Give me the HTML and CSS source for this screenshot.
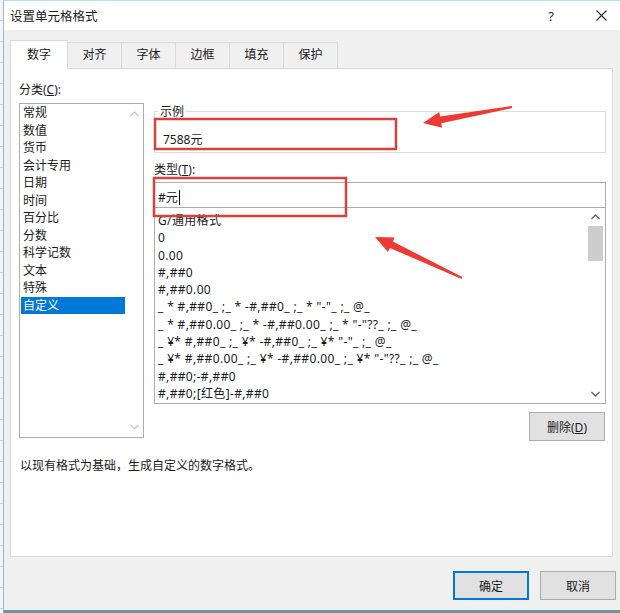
FILE: index.html
```html
<!DOCTYPE html>
<html lang="zh-CN">
<head>
    <meta charset="UTF-8">
    <meta name="viewport" content="width=device-width, initial-scale=1.0">
    <title>设置单元格格式</title>
    <link rel="stylesheet" href="styles.css">
</head>
<body>
    <div class="window">
        <!-- Title bar -->
        <div class="titlebar">
            <span class="title">设置单元格格式</span>
            <span class="help">?</span>
            <span class="close">
                <svg width="11" height="11" viewBox="0 0 11 11"><path d="M0.5 0.5 L10.5 10.5 M10.5 0.5 L0.5 10.5" stroke="#2b2b2b" stroke-width="1.1" fill="none"/></svg>
            </span>
        </div>

        <div class="dialog-body">
            <!-- Tabs -->
            <div class="tabs">
                <div class="tab active">数字</div>
                <div class="tab">对齐</div>
                <div class="tab">字体</div>
                <div class="tab">边框</div>
                <div class="tab">填充</div>
                <div class="tab">保护</div>
            </div>

            <div class="panel">
                <div class="panel-main">
                    <!-- Category list -->
                    <div class="col-left">
                        <div class="label">分类(<u>C</u>):</div>
                        <div class="listbox category">
                            <ul class="items">
                                <li>常规</li>
                                <li>数值</li>
                                <li>货币</li>
                                <li>会计专用</li>
                                <li>日期</li>
                                <li>时间</li>
                                <li>百分比</li>
                                <li>分数</li>
                                <li>科学记数</li>
                                <li>文本</li>
                                <li>特殊</li>
                                <li class="selected">自定义</li>
                            </ul>
                            <div class="scrollbar disabled">
                                <span class="arrow">
                                    <svg width="9" height="6" viewBox="0 0 9 6"><path d="M0.5 5 L4.5 1 L8.5 5" stroke="#c4c4c4" stroke-width="1.2" fill="none"/></svg>
                                </span>
                                <span class="track"></span>
                                <span class="arrow">
                                    <svg width="9" height="6" viewBox="0 0 9 6"><path d="M0.5 1 L4.5 5 L8.5 1" stroke="#c4c4c4" stroke-width="1.2" fill="none"/></svg>
                                </span>
                            </div>
                        </div>
                    </div>

                    <!-- Sample / type / formats -->
                    <div class="col-right">
                        <fieldset class="sample">
                            <legend>示例</legend>
                            <div class="sample-value">7588元</div>
                        </fieldset>

                        <div class="label type-label">类型(<u>T</u>):</div>
                        <div class="type-input">#元<span class="caret"></span></div>

                        <div class="listbox formats">
                            <ul class="items">
                                <li>G/通用格式</li>
                                <li>0</li>
                                <li>0.00</li>
                                <li>#,##0</li>
                                <li>#,##0.00</li>
                                <li>_ * #,##0_ ;_ * -#,##0_ ;_ * "-"_ ;_ @_</li>
                                <li>_ * #,##0.00_ ;_ * -#,##0.00_ ;_ * "-"??_ ;_ @_</li>
                                <li>_ ¥* #,##0_ ;_ ¥* -#,##0_ ;_ ¥* "-"_ ;_ @_</li>
                                <li>_ ¥* #,##0.00_ ;_ ¥* -#,##0.00_ ;_ ¥* "-"??_ ;_ @_</li>
                                <li>#,##0;-#,##0</li>
                                <li>#,##0;[红色]-#,##0</li>
                            </ul>
                            <div class="scrollbar">
                                <span class="arrow">
                                    <svg width="9" height="6" viewBox="0 0 9 6"><path d="M0.5 5 L4.5 1 L8.5 5" stroke="#606060" stroke-width="1.3" fill="none"/></svg>
                                </span>
                                <span class="thumb"></span>
                                <span class="track"></span>
                                <span class="arrow">
                                    <svg width="9" height="6" viewBox="0 0 9 6"><path d="M0.5 1 L4.5 5 L8.5 1" stroke="#606060" stroke-width="1.3" fill="none"/></svg>
                                </span>
                            </div>
                        </div>

                        <div class="row-delete">
                            <button class="btn">删除(<u>D</u>)</button>
                        </div>
                    </div>
                </div>

                <p class="desc">以现有格式为基础，生成自定义的数字格式。</p>
            </div>

            <!-- Footer buttons -->
            <div class="footer">
                <button class="btn primary">确定</button>
                <button class="btn">取消</button>
            </div>
        </div>
    </div>

    <!-- Red annotations drawn over the dialog -->
    <svg class="annotations" width="620" height="613" viewBox="0 0 620 613">
        <rect x="155" y="119" width="241" height="30" fill="none" stroke="#d4423f" stroke-width="2.5"/>
        <rect x="154" y="178" width="192" height="38" fill="none" stroke="#d4423f" stroke-width="2.5"/>
        <polygon fill="#ec3b33" points="423,123 442.1,127.7 441.3,123.2 512.2,108 511.8,106 440.1,116.4 439.3,111.9"/>
        <polygon fill="#ec3b33" points="375,237 387.9,251.9 389.8,247.9 461.6,278.9 462.4,277.1 392.8,241.5 394.7,237.5"/>
    </svg>
</body>
</html>
```

FILE: styles.css
```css
body {
    margin: 0;
    position: relative;
    width: 620px;
    height: 613px;
    overflow: hidden;
    font-family: "Noto Sans", "Noto Sans CJK SC", sans-serif;
    font-size: 12px;
    color: #1a1a1a;
    background: repeating-linear-gradient(to bottom, #f3f6f8 0, #f3f6f8 20px, #c8d2d9 20px, #c8d2d9 21px);
}

/* Window frame */
.window {
    box-sizing: border-box;
    margin-left: 3px;
    width: 617px;
    height: 613px;
    border-left: 1px solid #9db6c8;
    border-top: 1px solid #b5dfee;
    border-bottom: 3px solid #6e989e;
    background: #f0f0f0;
    display: flex;
    flex-direction: column;
}

.titlebar {
    height: 29px;
    background: #fff;
    display: flex;
    align-items: center;
    padding-left: 6px;
    padding-right: 4px;
}

.title {
    flex: 1;
    font-size: 12.5px;
}

.help {
    width: 20px;
    text-align: center;
    font-size: 13px;
    color: #2b2b2b;
    margin-right: 25px;
}

.close {
    width: 30px;
    display: flex;
    justify-content: center;
}

/* Tabs */
.tabs {
    display: flex;
    align-items: flex-end;
    padding: 10px 0 0 6px;
}

.tab {
    box-sizing: border-box;
    width: 55px;
    height: 26px;
    line-height: 24px;
    text-align: center;
    border: 1px solid #d9d9d9;
    border-bottom: none;
    margin-left: -1px;
    background: #f0f0f0;
}

.tab.active {
    width: 58px;
    height: 29px;
    line-height: 28px;
    margin-left: 0;
    margin-bottom: -1px;
    background: #fff;
    position: relative;
    z-index: 1;
}

/* Panel */
.panel {
    box-sizing: border-box;
    margin-left: 6px;
    width: 603px;
    height: 489px;
    border: 1px solid #d9d9d9;
    background: #fff;
    padding: 12px 6px 0 8px;
}

.panel-main {
    display: flex;
    gap: 10px;
    align-items: flex-start;
}

.label {
    line-height: 17px;
}

.col-left {
    width: 125px;
}

.col-right {
    width: 452px;
    padding-top: 22px;
    display: flex;
    flex-direction: column;
}

/* List boxes */
.listbox {
    box-sizing: border-box;
    display: flex;
    border: 1px solid #acacac;
    background: #fff;
}

.items {
    flex: 1;
    list-style: none;
    margin: 0;
    padding: 0;
    overflow: hidden;
    white-space: nowrap;
}

.category {
    margin-top: 5px;
    height: 335px;
}

.category .items li {
    line-height: 17.5px;
    padding-left: 2px;
    margin-left: 1px;
}

.category .items li.selected {
    background: #0078d7;
    color: #fff;
}

.scrollbar {
    width: 17px;
    display: flex;
    flex-direction: column;
    align-items: center;
}

.scrollbar .arrow {
    height: 18px;
    display: flex;
    align-items: center;
    justify-content: center;
}

.scrollbar .track {
    flex: 1;
}

.scrollbar .thumb {
    width: 15px;
    height: 35px;
    background: #cdcdcd;
}

.category .scrollbar {
    width: 18px;
}

.category .scrollbar .arrow {
    height: 20px;
}

/* Sample group */
.sample {
    margin: 0;
    padding: 0 8px 3px 8px;
    border: 1px solid #dcdcdc;
    height: 50px;
    box-sizing: border-box;
}

.sample legend {
    padding: 0 2px;
    margin-left: -5px;
    line-height: 17px;
}

.sample-value {
    line-height: 17px;
    margin-top: 11px;
}

.type-label {
    margin-top: 8px;
}

.type-input {
    box-sizing: border-box;
    margin-top: 4px;
    height: 25px;
    border: 1px solid #acacac;
    border-bottom: none;
    padding: 4px 3px 0;
    line-height: 17px;
    display: flex;
    align-items: center;
}

.caret {
    display: inline-block;
    width: 1px;
    height: 15px;
    background: #000;
    margin-left: 1px;
}

.formats {
    height: 197px;
}

.formats .items {
    padding: 4px 0 0 3px;
}

.formats .items li {
    line-height: 17.3px;
    letter-spacing: 0.35px;
}

.formats .scrollbar {
    margin-right: 1px;
}

/* Buttons */
.row-delete {
    display: flex;
    justify-content: flex-end;
    margin-top: 8px;
    padding-right: 1px;
}

.btn {
    box-sizing: border-box;
    width: 76px;
    height: 29px;
    border: 1px solid #adadad;
    background: #e1e1e1;
    font-family: inherit;
    font-size: 12px;
    color: #1a1a1a;
    padding: 0;
}

.btn.primary {
    border-color: #0078d7;
    box-shadow: inset 0 0 0 1px #0078d7;
}

.desc {
    margin: 16px 0 0 1px;
    line-height: 17px;
}

.footer {
    display: flex;
    justify-content: flex-end;
    gap: 11px;
    padding: 14px 4px 0 0;
}

/* Annotation overlay */
.annotations {
    position: absolute;
    top: 0;
    left: 0;
    pointer-events: none;
}
```
